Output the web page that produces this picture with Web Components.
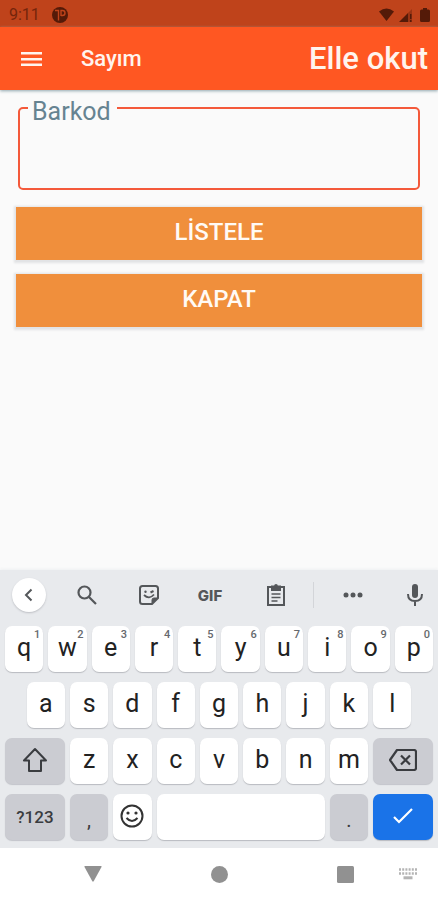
<!DOCTYPE html>
<html lang="tr">
<head>
<meta charset="utf-8">
<meta name="viewport" content="width=device-width, initial-scale=1">
<title>Sayım</title>
<style>
  body { margin: 0; font-family: Roboto, "Liberation Sans", sans-serif; background: #fafafa; }
</style>
</head>
<body>
<count-app></count-app>

<script>
const base = `
  *, *::before, *::after { box-sizing: border-box; }
  button { font: inherit; color: inherit; background: none; border: 0; padding: 0; margin: 0; cursor: pointer; }
  svg { display: block; }
`;

function define(name, html, setup) {
  const template = document.createElement("template");
  template.innerHTML = `<style>${base}</style>` + html;
  customElements.define(name, class extends HTMLElement {
    constructor() {
      super();
      this.attachShadow({ mode: "open", delegatesFocus: true }).append(template.content.cloneNode(true));
    }
    connectedCallback() { if (setup) setup(this, this.shadowRoot); }
  });
}

define("status-bar", `
  <style>
    :host { display: flex; align-items: center; height: 27px; padding: 2px 6px 0 9px; background: #bf431b; color: #74250c; font-size: 16px; }
    .app { margin-left: 12px; }
    .system { display: flex; align-items: center; gap: 3px; margin-left: auto; color: #541a08; }
  </style>
  <span>9:11</span>
  <svg class="app" width="16" height="16" viewBox="0 0 16 16"><circle cx="8" cy="8" r="8" fill="#541a08"/><path d="M3 3.500h3.500v10M9 9V3.500h1.500a2.500 2.500 0 0 1 0 5H9" fill="none" stroke="#bf431b" stroke-width="1.400"/></svg>
  <span class="system">
    <svg width="17" height="14" viewBox="0 0 17 14" fill="currentColor"><path d="M1 3.500Q8.500-2.500 16 3.500L8.500 13z"/></svg>
    <svg width="17" height="14" viewBox="0 0 17 14" fill="currentColor"><path d="M1 14 10 5v9z"/><path d="M10 5l4-4v13h-4z" opacity=".35"/><path d="M12 6h1.500v5H12zM12 12h1.500v2H12z"/></svg>
    <svg width="14" height="14" viewBox="0 0 14 14" fill="currentColor"><path d="M5 0h4v1.500h1.500q1.500 0 1.500 1.500v9.500q0 1.500-1.500 1.500h-7Q2 14 2 12.500V3q0-1.500 1.500-1.500H5z"/></svg>
  </span>
`);

define("app-bar", `
  <style>
    :host { display: flex; align-items: center; height: 63px; padding: 0 10px 0 20px; background: #ff5722; color: #fff4ee; box-shadow: 0 1px 3px #8fa5ad; position: relative; }
    .menu { display: grid; place-items: center; width: 24px; height: 48px; }
    h1 { margin: 0 0 0 37px; font-size: 22px; line-height: 32px; font-weight: 500; }
    .action { margin-left: auto; font-size: 31px; line-height: 40px; font-weight: 500; }
  </style>
  <button class="menu" aria-label="Menü"><svg width="22" height="16" viewBox="0 0 22 16" fill="currentColor"><path d="M0 1h21v2.500H0zM0 7h21v2.500H0zM0 12.500h21V15H0z"/></svg></button>
  <h1><slot></slot></h1>
  <button class="action"><slot name="action"></slot></button>
`);

define("outlined-field", `
  <style>
    :host { display: block; padding: 0 2px; }
    fieldset { margin: 0; padding: 0; border: 2px solid #f4593a; border-radius: 5px; min-width: 0; }
    legend { margin-left: 8px; padding: 8px 6px 0 4px; font-size: 25px; line-height: 20px; color: #668391; }
    input { display: block; width: 100%; height: 66px; padding: 0 12px 12px; border: 0; outline: 0; background: none; font: inherit; font-size: 25px; color: #222; }
  </style>
  <fieldset>
    <legend><label for="value"><slot></slot></label></legend>
    <input id="value" type="text">
  </fieldset>
`);

define("wide-button", `
  <style>
    :host { display: block; }
    button { display: block; width: 100%; height: 53px; background: #f08f3c; color: #fffaf5; font-size: 24px; font-weight: 500; line-height: 51px; padding-bottom: 2px; box-shadow: 0 1px 2px 2px #e2e3e5; }
  </style>
  <button><slot></slot></button>
`);

define("key-cap", `
  <style>
    :host { display: block; grid-column: span 2; height: 46px; }
    :host([wide]) { grid-column: span 3; }
    :host([space]) { grid-column: span 8; }
    :host([inset]) { grid-column: 2 / span 2; }
    button { position: relative; display: grid; place-items: center; width: 100%; height: 100%; padding-bottom: 2px; border-radius: 7px; background: #fff; color: #222; font-size: 25px; line-height: 28px; box-shadow: 0 1px 1px #b9bbc0; }
    :host([tone="gray"]) button { background: #cbccd2; color: #3a3c40; box-shadow: 0 1px 1px #c2c4ca; }
    :host([tone="blue"]) button { background: #1a73e8; color: #fff; }
    :host([small]) button { padding-bottom: 0; font-size: 17px; font-weight: 500; }
    :host([low]) button { padding-top: 8px; font-size: 20px; }
    .hint { position: absolute; top: 3px; right: 3px; font-size: 11px; line-height: 12px; font-weight: 500; color: #66696d; }
  </style>
  <button><slot></slot><span class="hint"></span></button>
`, (host, root) => {
  const hint = root.querySelector(".hint");
  if (host.hasAttribute("hint")) hint.textContent = host.getAttribute("hint");
  else hint.remove();
  if (host.hasAttribute("name")) root.querySelector("button").setAttribute("aria-label", host.getAttribute("name"));
});

define("keyboard-tools", `
  <style>
    :host { display: grid; grid-template-columns: 58fr 58fr 66fr 57fr 75fr 1px 78fr 46fr; align-items: center; height: 50px; color: #54575a; }
    button { display: grid; place-items: center; height: 40px; }
    .back { width: 34px; height: 34px; justify-self: center; border-radius: 50%; background: #fff; box-shadow: 0 1px 2px #bdbfc4; }
    .gif { font-family: Inter, sans-serif; font-size: 15px; font-weight: 800; }
    i { height: 26px; background: #d3d5d9; }
  </style>
  <button class="back" aria-label="Geri"><svg width="14" height="14" viewBox="0 0 14 14" fill="none" stroke="currentColor" stroke-width="2"><path d="M9.500 1.500 4 7l5.500 5.500"/></svg></button>
  <button aria-label="Ara"><svg width="20" height="20" viewBox="0 0 20 20" fill="none" stroke="currentColor" stroke-width="2.200"><circle cx="7.500" cy="7.500" r="6"/><path d="m12 12 7 7"/></svg></button>
  <button aria-label="Çıkartma"><svg width="20" height="20" viewBox="0 0 20 20" fill="none" stroke="currentColor" stroke-width="2"><path d="M3.500 1h13Q19 1 19 3.500V13l-6 6H3.500Q1 19 1 16.500v-13Q1 1 3.500 1z"/><path d="M19 13h-4q-2 0-2 2v4z" fill="currentColor" stroke-width="1"/><path d="M5 10q5 5 10-.5" stroke-width="1.800"/><circle cx="6.500" cy="6.800" r="1.200" fill="currentColor" stroke="none"/><path d="m11.500 7.500 3-1.500"/></svg></button>
  <button class="gif">GIF</button>
  <button aria-label="Pano"><svg width="20" height="22" viewBox="0 0 20 22" fill="none" stroke="currentColor" stroke-width="2"><path d="M2 3h16v18H2z"/><path d="M6 2.500h8V6H6z" fill="currentColor"/><circle cx="10" cy="1.800" r="1.800" fill="currentColor" stroke="none"/><path d="M5.500 10h9M5.500 13.500h9M5.500 17h6" stroke-width="1.500"/></svg></button>
  <i></i>
  <button aria-label="Diğer"><svg width="20" height="6" viewBox="0 0 20 6" fill="currentColor"><circle cx="3" cy="3" r="2.500"/><circle cx="10" cy="3" r="2.500"/><circle cx="17" cy="3" r="2.500"/></svg></button>
  <button aria-label="Sesli giriş"><svg width="16" height="22" viewBox="0 0 16 22"><rect x="5" width="6" height="14" rx="3" fill="currentColor"/><path d="M1 10q0 7 7 7t7-7M8 17v5" fill="none" stroke="currentColor" stroke-width="2"/></svg></button>
`);

define("soft-keyboard", `
  <style>
    :host { display: block; padding: 0 5px 8px; background: #e8eaed; box-shadow: 0 -1px 3px #eef0f2; }
    keyboard-tools { margin: 0 -5px 6px; }
    .keys { display: grid; grid-template-columns: repeat(20, minmax(0, 1fr)); gap: 10px 5px; }
  </style>
  <keyboard-tools></keyboard-tools>
  <div class="keys">
    <key-cap hint="1">q</key-cap><key-cap hint="2">w</key-cap><key-cap hint="3">e</key-cap><key-cap hint="4">r</key-cap><key-cap hint="5">t</key-cap><key-cap hint="6">y</key-cap><key-cap hint="7">u</key-cap><key-cap hint="8">i</key-cap><key-cap hint="9">o</key-cap><key-cap hint="0">p</key-cap>
    <key-cap inset>a</key-cap><key-cap>s</key-cap><key-cap>d</key-cap><key-cap>f</key-cap><key-cap>g</key-cap><key-cap>h</key-cap><key-cap>j</key-cap><key-cap>k</key-cap><key-cap>l</key-cap>
    <key-cap wide tone="gray" name="Shift"><svg width="26" height="26" viewBox="0 0 26 26" fill="none" stroke="currentColor" stroke-width="2" stroke-linejoin="round"><path d="M13 2 2 13.500h5V24h12V13.500h5z"/></svg></key-cap>
    <key-cap>z</key-cap><key-cap>x</key-cap><key-cap>c</key-cap><key-cap>v</key-cap><key-cap>b</key-cap><key-cap>n</key-cap><key-cap>m</key-cap>
    <key-cap wide tone="gray" name="Sil"><svg width="28" height="22" viewBox="0 0 28 22" fill="none" stroke="currentColor" stroke-width="2.200" stroke-linejoin="round"><path d="M8 1h17q2 0 2 2v16q0 2-2 2H8L1 11z"/><path d="m12 6.500 9 9m0-9-9 9"/></svg></key-cap>
    <key-cap wide small tone="gray">?123</key-cap>
    <key-cap low tone="gray">,</key-cap>
    <key-cap name="Emoji"><svg width="24" height="24" viewBox="0 0 24 24" fill="none" stroke="#333" stroke-width="2"><circle cx="12" cy="12" r="10.500"/><path d="M6.500 14q5.500 6 11 0"/><g fill="#333" stroke="none"><circle cx="8" cy="9" r="1.600"/><circle cx="16" cy="9" r="1.600"/></g></svg></key-cap>
    <key-cap space name="Boşluk"></key-cap>
    <key-cap low tone="gray">.</key-cap>
    <key-cap wide tone="blue" name="Tamam"><svg width="22" height="18" viewBox="0 0 22 18" fill="none" stroke="currentColor" stroke-width="2.200"><path d="m2 10 5 5L20 2"/></svg></key-cap>
  </div>
`);

define("nav-bar", `
  <style>
    :host { display: grid; grid-template-columns: 60fr 66fr 186fr 66fr 60fr; height: 52px; background: #fff; color: #919191; }
    button { display: grid; place-items: center; }
    button:first-of-type { grid-column: 2; }
  </style>
  <button aria-label="Geri"><svg width="18" height="16" viewBox="0 0 18 16" fill="currentColor"><path d="M1 0h16q1 0 .5 1L9.800 15q-.8 1.300-1.600 0L.5 1Q0 0 1 0z"/></svg></button>
  <button aria-label="Ana ekran"><svg width="17" height="17" viewBox="0 0 17 17" fill="currentColor"><circle cx="8.500" cy="8.500" r="8.500"/></svg></button>
  <button aria-label="Son uygulamalar"><svg width="17" height="17" viewBox="0 0 17 17" fill="currentColor"><rect width="17" height="17" rx="1.500"/></svg></button>
  <button aria-label="Klavye seç"><svg width="18" height="12" viewBox="0 0 18 12" fill="none" stroke="#b4b4b4"><path d="M0 1.500h18M0 5.500h18" stroke-width="2.500" stroke-dasharray="2 1.200"/><path d="M4.500 9.800h9" stroke-width="3"/></svg></button>
`);

define("count-app", `
  <style>
    :host { display: flex; flex-direction: column; min-height: 100vh; }
    main { flex: 1; display: flex; flex-direction: column; padding: 4px 16px 16px; }
    wide-button { margin-top: 14px; }
    outlined-field + wide-button { margin-top: 17px; }
  </style>
  <status-bar></status-bar>
  <app-bar>Sayım<span slot="action">Elle okut</span></app-bar>
  <main>
    <outlined-field>Barkod</outlined-field>
    <wide-button>LİSTELE</wide-button>
    <wide-button>KAPAT</wide-button>
  </main>
  <soft-keyboard></soft-keyboard>
  <nav-bar></nav-bar>
`);
</script>
</body>
</html>
